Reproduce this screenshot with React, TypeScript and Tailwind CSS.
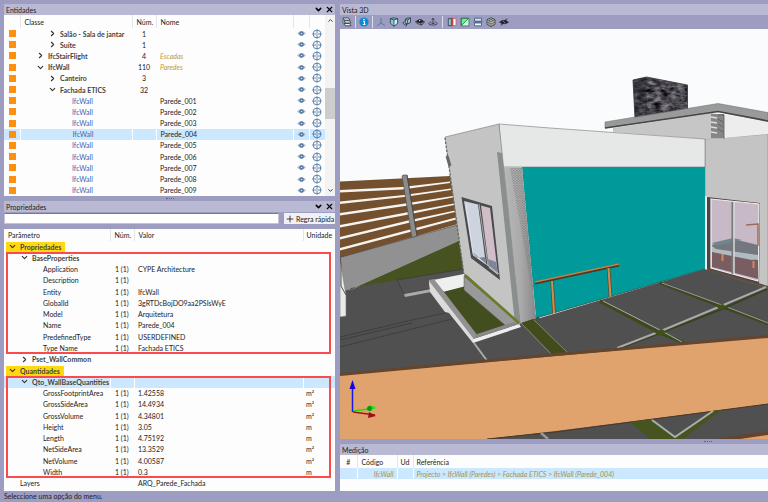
import React from "react";
import { ChevronDown, ChevronRight, ChevronUp, Plus, X } from "lucide-react";

type Entity = { name: string; level: number; state?: "open" | "closed"; count?: string; label?: string; selected?: boolean };

const entities: Entity[] = [
  { name: "Salão - Sala de jantar", level: 2, state: "closed", count: "1" },
  { name: "Suíte", level: 2, state: "closed", count: "1" },
  { name: "IfcStairFlight", level: 1, state: "closed", count: "4", label: "Escadas" },
  { name: "IfcWall", level: 1, state: "open", count: "110", label: "Paredes" },
  { name: "Canteiro", level: 2, state: "closed", count: "3" },
  { name: "Fachada ETICS", level: 2, state: "open", count: "32" },
  ...[1, 2, 3, 4, 5, 6, 7, 8, 9].map((n) => ({ name: "IfcWall", level: 3, label: `Parede_00${n}`, selected: n === 4 })),
];

const baseProperties = [
  ["Application", "CYPE Architecture"],
  ["Description", ""],
  ["Entity", "IfcWall"],
  ["GlobalId", "3gRTDcBojDO9aa2PSIsWyE"],
  ["Model", "Arquitetura"],
  ["Name", "Parede_004"],
  ["PredefinedType", "USERDEFINED"],
  ["Type Name", "Fachada ETICS"],
];

const quantities = [
  ["GrossFootprintArea", "1.42558", "m²"],
  ["GrossSideArea", "14.4934", "m²"],
  ["GrossVolume", "4.34801", "m²"],
  ["Height", "3.05", "m"],
  ["Length", "4.75192", "m"],
  ["NetSideArea", "13.3529", "m²"],
  ["NetVolume", "4.00587", "m²"],
  ["Width", "0.3", "m"],
];

function Toggle({ open, label }: { open: boolean; label: string }) {
  const Icon = open ? ChevronDown : ChevronRight;
  return (
    <button aria-label={label} aria-expanded={open} className="flex w-3 shrink-0 items-center">
      <Icon size={9} strokeWidth={3} color="#333" />
    </button>
  );
}

function PanelTitle({ title, controls }: { title: string; controls?: boolean }) {
  return (
    <div className="flex h-[11px] shrink-0 items-center bg-[#b9b9d3] pl-[2px] pr-px">
      <h2 className="flex-1">{title}</h2>
      {controls && (
        <div className="flex gap-[2px] text-black">
          <button aria-label="Recolher"><ChevronDown size={9} strokeWidth={4} /></button>
          <button aria-label="Fechar"><X size={9} strokeWidth={3} /></button>
        </div>
      )}
    </div>
  );
}

function EyeIcon() {
  return (
    <svg viewBox="0 0 8 8" className="mx-auto block size-[9px]">
      <path d="M0 4Q4 .2 8 4Q4 7.8 0 4Z" fill="#a9bdd6" />
      <circle cx="4" cy="4" r="2" fill="#54779f" />
      <circle cx="4" cy="4" r=".7" fill="#dbe6f2" />
    </svg>
  );
}

function TargetIcon() {
  return (
    <svg viewBox="0 0 10 10" className="mx-auto block size-[10px]" fill="none" stroke="#5078a4">
      <circle cx="5" cy="5" r="3.9" strokeWidth=".9" />
      <path d="M5 .4V4M5 6v3.6M.4 5H4M6 5h3.6" strokeWidth=".9" />
      <circle cx="5" cy="5" r=".7" fill="#5078a4" stroke="none" />
    </svg>
  );
}

const indent = ["", "pl-4", "pl-7", "pl-[52px]"];

function EntitiesPanel() {
  return (
    <section className="shrink-0">
      <PanelTitle title="Entidades" controls />
      <div className="flex bg-[#fdfdfe]">
        <table className="h-[181px] flex-1 table-fixed border-collapse">
          <colgroup>
            <col className="w-4" /><col className="w-[112px]" /><col className="w-6" /><col />
            <col className="w-4" /><col className="w-4" />
          </colgroup>
          <thead>
            <tr className="h-[13px] text-left">
              <th className="border-r border-[#e4e4ec] p-0" />
              <th className="border-r border-[#e4e4ec] p-0 pl-1 font-normal">Classe</th>
              <th className="border-r border-[#e4e4ec] p-0 pl-[4px] font-normal">Núm.</th>
              <th className="border-r border-[#e4e4ec] p-0 pl-[4px] font-normal">Nome</th>
              <th className="border-r border-[#e4e4ec] p-0" />
              <th className="p-0" />
            </tr>
          </thead>
          <tbody>
            {entities.map((e, i) => (
              <tr key={i} className={e.selected ? "bg-[#cce8ff]" : ""}>
                <td className={e.selected ? "border-r border-white p-0" : "p-0"}>
                  <div className="ml-[5px] size-[7px] bg-[#ff8f0f]" />
                </td>
                <td className={e.selected ? "border-r border-white p-0" : "p-0"}>
                  <div className={`flex items-center whitespace-nowrap ${indent[e.level]} ${e.state ? "font-bold text-[#444]" : "text-[#3564b4]"}`}>
                    {e.state && <Toggle open={e.state === "open"} label={e.name} />}
                    {e.name}
                  </div>
                </td>
                <td className={e.selected ? "border-r border-white p-0 text-center" : "p-0 text-center"}>{e.count}</td>
                <td className={e.state ? "p-0 pl-[4px] italic text-[#c19a35]" : "p-0 pl-[4px]"}>{e.label}</td>
                <td className={e.selected ? "border-x border-white p-0" : "p-0"}><EyeIcon /></td>
                <td className="p-0"><TargetIcon /></td>
              </tr>
            ))}
          </tbody>
        </table>
        <div className="flex w-[10px] flex-col items-center justify-between bg-[#f3f3f3] py-[2px]">
          <ChevronUp size={7} strokeWidth={3} />
          <div className="mt-16 h-[31px] w-full bg-[#cdcdcd]" />
          <div className="flex-1" />
          <ChevronDown size={7} strokeWidth={3} />
        </div>
      </div>
    </section>
  );
}

function PropertyRow({ name, value, unit }: { name: string; value: string; unit?: string }) {
  return (
    <tr>
      <td className="p-0 pl-[39px]">{name}</td>
      <td className="p-0 pl-[5px]">1 (1)</td>
      <td className="p-0 pl-[4px]">{value}</td>
      <td className="p-0 pl-[3px]">{unit}</td>
    </tr>
  );
}

function Category({ name }: { name: string }) {
  return (
    <tr>
      <td colSpan={4} className="p-0">
        <div className="ml-[2px] flex w-max items-center bg-[#ffd90f] pl-[2px] pr-1 font-bold text-[#444]">
          <Toggle open label={name} />{name}
        </div>
      </td>
    </tr>
  );
}

function GroupCell({ name, open }: { name: string; open: boolean }) {
  return (
    <div className="flex items-center whitespace-nowrap pl-4 font-bold text-[#444]">
      <Toggle open={open} label={name} />{name}
    </div>
  );
}

const redFrame = "relative after:pointer-events-none after:absolute after:inset-y-0 after:left-[2px] after:right-1 after:border-2 after:border-[#fc4a4c] after:content-['']";

function PropertiesPanel() {
  return (
    <section className="flex flex-1 flex-col">
      <div className="flex h-[5px] shrink-0 items-center justify-center">
        <span className="w-2 border-t border-dotted border-[#60608a]" />
      </div>
      <PanelTitle title="Propriedades" controls />
      <div className="mt-px flex h-[11px] shrink-0 gap-[5px]">
        <input aria-label="Procurar propriedade" className="min-w-0 flex-1 border border-[#c4c4d6] border-t-[#77778f] bg-white px-1 outline-none" />
        <button className="flex w-[51px] items-center gap-px whitespace-nowrap bg-[#f0f0f5] pl-px">
          <Plus size={10} strokeWidth={2} className="shrink-0" />
          Regra rápida
        </button>
      </div>
      <div className="mt-[5px] flex-1 bg-[#fdfdfe]">
        <table className="h-[260px] w-full table-fixed border-collapse">
          <colgroup>
            <col /><col className="w-6" /><col className="w-[169px]" /><col className="w-8" />
          </colgroup>
          <thead>
            <tr className="h-3 text-left">
              <th className="border-r border-[#e4e4ec] p-0 pl-[4px] font-normal">Parâmetro</th>
              <th className="border-r border-[#e4e4ec] p-0 pl-[4px] font-normal">Núm.</th>
              <th className="border-r border-[#e4e4ec] p-0 pl-[4px] font-normal">Valor</th>
              <th className="p-0 pl-[3px] font-normal">Unidade</th>
            </tr>
          </thead>
          <tbody><Category name="Propriedades" /></tbody>
          <tbody className={redFrame}>
            <tr><td colSpan={4} className="p-0"><GroupCell name="BaseProperties" open /></td></tr>
            {baseProperties.map(([n, v]) => <PropertyRow key={n} name={n} value={v} />)}
          </tbody>
          <tbody>
            <tr><td colSpan={4} className="p-0"><GroupCell name="Pset_WallCommon" open={false} /></td></tr>
            <Category name="Quantidades" />
          </tbody>
          <tbody className={redFrame}>
            <tr className="bg-[#cce8ff]">
              <td className="border-r border-white p-0"><GroupCell name="Qto_WallBaseQuantities" open /></td>
              <td className="border-r border-white p-0" />
              <td className="border-r border-white p-0" />
              <td className="p-0" />
            </tr>
            {quantities.map(([n, v, u]) => <PropertyRow key={n} name={n} value={v} unit={u} />)}
          </tbody>
          <tbody>
            <tr>
              <td className="p-0 pl-4">Layers</td>
              <td className="p-0" />
              <td className="p-0 pl-[4px]">ARQ_Parede_Fachada</td>
              <td className="p-0" />
            </tr>
          </tbody>
        </table>
      </div>
    </section>
  );
}

function Tool({ label, children }: { label: string; children: React.ReactNode }) {
  return (
    <button aria-label={label} className="flex size-[10px] items-center justify-center">
      <svg viewBox="0 0 10 10" className="size-[10px]" fill="none" stroke="#2c3440" strokeWidth=".8" strokeLinejoin="round">{children}</svg>
    </button>
  );
}

function Toolbar() {
  return (
    <div className="flex h-[14px] shrink-0 items-center bg-[#9d9dc1] pl-[2px]">
      <Tool label="Camadas">
        <path d="M1 1h5.500l1.500 2.200H2.500Z" fill="#f5f5ef" />
        <path d="M2 3.800h5.500L9 6H3.500Z" fill="#f5f5ef" />
        <path d="M2 6.500h5.500L9 8.800H3.500Z" fill="#f5f5ef" />
        <path d="M.7 1.500v4.500l2 2.500" stroke="#3b7f83" />
      </Tool>
      <span className="mx-[3px] h-3 w-px bg-[#dedeeb]" />
      <Tool label="Informação">
        <circle cx="5" cy="5" r="4.600" fill="#078bd3" stroke="none" />
        <path d="M4 4.300h1.500v3M3.800 7.400h2.700" stroke="#fff" strokeWidth="1" />
        <circle cx="5" cy="2.500" r=".8" fill="#fff" stroke="none" />
      </Tool>
      <span className="mx-[3px] h-3 w-px bg-[#dedeeb]" />
      <div className="flex gap-[3px]">
        <Tool label="Eixos"><path d="M5 1v5L1 9M5 6l4 2.500" stroke="#46718c" /></Tool>
        <Tool label="Vista frontal"><path d="M1.300 1.700 5 .8l3.700.9v4.500L5 9.400 1.300 6.200Z" fill="#8ccbd4" /><path d="M5 3v6M1.300 1.700 5 3l3.700-1.300" /><path d="m5.600 3.400 2.400-.9v3.400L5.600 8Z" fill="#c5f2f5" stroke="none" /></Tool>
        <Tool label="Rodar vista"><path d="m4 1.500 4.500-.7v4.700L5.500 7 3 5.500Z" fill="#9bd0d5" /><path d="m3 2.500 2.800.5 2.700-2M5.600 3v4M2.500 4C.4 5.500.5 7.500 4.500 8M3.600 6.500 5 8 3.600 9.500" /></Tool>
        <Tool label="Orbitar"><path d="M.8 3.800Q-.2 6 5 7.500M9.200 4q1 1.500-2 3" stroke="#333" /><path d="M1.200 4.500Q5 .5 8.800 4.500 5 7.500 1.200 4.500Z" fill="#222" /><circle cx="4.700" cy="3.600" r=".7" fill="#fff" stroke="none" /><path d="m5.500 6 2 1.400-2 1.400Z" fill="#222" stroke="none" /></Tool>
        <Tool label="Deslocar"><path d="M5 7V1.500M3.700 3 5 1.200 6.300 3M3.400 4.800C-.5 6-.2 8 5 8s5.600-2 1.600-3.200M3.500 6.500h3" /></Tool>
      </div>
      <span className="mx-1 h-3 w-px bg-[#dedeeb]" />
      <div className="flex gap-[3px]">
        <Tool label="Plano de corte"><path d="M1.300 1.600h3v7h-3Z" fill="#95c9d3" /><path d="M6 1.600h3v7H6Z" fill="#fff" stroke="#e25253" /><path d="M5.100.5v9" stroke="#c93336" strokeWidth="1.200" /></Tool>
        <Tool label="Secção"><path d="M1.200 1.200h7.600v7.600H1.200Z" fill="#65f18d" /><path d="M8.500 1.600 1.600 8.500h6.900Z" fill="#cafbd7" stroke="none" /><path d="M1 9 9 1" stroke="#128347" /></Tool>
        <Tool label="Dividir"><path d="M1.500 1.200h7v3h-7Z" fill="#c7e7f0" stroke="#3e527d" /><path d="M1.500 6h7v2.800h-7Z" fill="#f5f7ff" stroke="#3e527d" /><path d="M.5 5h9" stroke="#3e527d" /></Tool>
        <Tool label="Modelo"><path d="m5 .7 4 2v4.700L5 9.500 1 7.400V2.700Z" fill="#c5cdb5" /><path d="m1 2.700 4 2 4-2M5 4.700v4.800M1 5l4 2 4-2M3 1.700l4 2v4.700M7 1.700l-4 2v4.700" strokeWidth=".5" /><path d="M5.400 5 7 4.200v1.600l-1.600.8Z" fill="#e9a292" stroke="none" /></Tool>
        <Tool label="Ocultar"><path d="M.5 5.200Q5 1.400 9.500 5.200 5 8.400.5 5.200Z" fill="#222" /><circle cx="5" cy="5" r="1.100" fill="#9d9dc1" stroke="none" /><path d="m2 8.500 6-7" stroke="#111" strokeWidth=".9" /></Tool>
      </div>
    </div>
  );
}

const slats = [
  "M340 190 402 187 450 181.500V183L402 189.500 340 192.500Z",
  "M340 201.500 404 195 451 188.500V190L404 197 340 204Z",
  "M340 213 405 203.500 453 196V197.500L405 206 340 215.500Z",
  "M340 225 406 212.500 454 203.500V205L406 215 340 227.500Z",
  "M340 237 408 220.500 455 210.500V212L408 223 340 239.500Z",
  "M340 248 410 229.500 456 217.500V219.500L410 232 340 250.500Z",
];

function Scene() {
  return (
    <svg role="img" aria-label="Modelo 3D da moradia" viewBox="340 29 428 410" preserveAspectRatio="xMidYMid slice" className="block size-full">
      <defs>
        <linearGradient id="column"><stop stopColor="#b9b9b9" /><stop offset=".55" stopColor="#aaa" /><stop offset="1" stopColor="#888" /></linearGradient>
        <pattern id="hatch" width="3" height="2.500" patternUnits="userSpaceOnUse"><path d="M0 0 3 2" stroke="#666" strokeWidth=".6" /></pattern>
        <filter id="stone" x="0" y="0" width="100%" height="100%" colorInterpolationFilters="sRGB">
          <feTurbulence type="fractalNoise" baseFrequency=".13 .28" numOctaves="3" seed="4" />
          <feColorMatrix values=".8 0 0 0 -.11  .8 0 0 0 -.12  .8 0 0 0 -.09  0 0 0 0 1" />
          <feComposite in2="SourceGraphic" operator="in" />
        </filter>
      </defs>
      <rect x="340" y="29" width="428" height="410" fill="#fafbfc" />

      <path d="M340 290 462 266 540 318 705 269 768 287V439H340Z" fill="#505051" />
      <path d="M340 181.500 450 176 458 224 340 258Z" fill="#75502f" />
      {slats.map((d) => <path key={d} d={d} fill="#f5f4f1" />)}
      <path d="m402 176 1-1h4l10 61-5 2Z" fill="#8b8b8b" stroke="#4b4b4b" strokeWidth=".6" />
      <path d="m407 175 10 61" stroke="#444" strokeWidth=".8" />
      <path d="M340 257.500 457 225l4 16-109 49-12 1Z" fill="#919191" stroke="#4d4d4d" strokeWidth=".7" />
      <path d="m350 290 109-49 5 28-67 11-46 8Z" fill="#465220" />
      <path d="m340 259 6 36v21l-6 1Z" fill="#e9ebeb" stroke="#777" strokeWidth=".6" />
      <path d="m340 256 1 8v22l5 9" stroke="#555" fill="none" />
      <path d="m397 280 67-11 2 12-37 8-25 5Z" fill="#535354" stroke="#39393a" strokeWidth=".7" />
      <path d="m404 294 27-5v3l-26 5Z" fill="#aaa" />
      <path d="m340 337 72-17 38-8M340 340l72-17M340 347l112-28" stroke="#373737" strokeWidth=".7" fill="none" />

      <path d="m705 139 63-5v154l-63-19Z" fill="#c4c4c4" stroke="#777" strokeWidth=".5" />
      <path d="m613 128 98-15 13 2-4 23-15 1-92-7Z" fill="#c6c6c6" />
      <path d="m724 114 44 8v12l-44 4Z" fill="#ededed" />
      <path d="M711 114h13v24h-13Z" fill="#858787" />
      <path d="m711 117 6 1M711 122l6 1M711 127l6 1M711 132l6 1" stroke="#ddd" strokeWidth="1.500" />
      <path d="M718 115h6v24M718 119l5 3M718 124l5 3M718 129l5 3" stroke="#57595b" strokeWidth=".8" fill="none" />
      <path d="m633 80 13.500-3 41 8v24L647 116l-12 2Z" fill="#454449" filter="url(#stone)" />
      <path d="m646.500 77 .5 39-12 2-2-38Z" fill="#1d1c22" fillOpacity=".35" />
      <path d="m633 80 13.500-3 41 8v24L647 116l-12 2Z" fill="none" stroke="#333238" strokeWidth=".8" />
      <path d="m605 122 113-18.500 50 9v9l-50-10L605 128Z" fill="#999b9b" stroke="#666" strokeWidth=".5" />
      <path d="m605 128 113-16.500 50 9.500" fill="none" stroke="#464646" strokeWidth="1.700" />

      <path d="m499 124 51 4 155 11v28H502Z" fill="#e6e8e8" stroke="#888" strokeWidth=".7" />
      <path d="M522 167h183v102l-155 45-14 4Z" fill="#009a9b" />
      <path d="m705 269-155 45-14 4" stroke="#304f4a" strokeWidth=".8" fill="none" />
      <path d="m502 167 20 .5 14 151-16 5Z" fill="url(#column)" />
      <path d="m510 168 12-.5 12 115-2 8Z" fill="url(#hatch)" />
      <path d="m445 137 54-13 3 28 18 172-3 1-53-50Z" fill="#c4c4c4" stroke="#777" strokeWidth=".6" />
      <path d="m497 152 5 1 18 170-5 1Z" fill="#8b8e8e" />
      <path d="m445 138 19 137" stroke="#646464" strokeWidth="1.200" strokeDasharray="2 2" fill="none" />
      <path d="m447 156 3 10" stroke="#666" strokeWidth="3" />
      <path d="m461.500 197 30.500 9 8 74-29-22Z" fill="#4a4b4d" />
      <path d="m464 201 14 3.500 8 60-13-9Z" fill="#cdd4df" />
      <path d="m481 205.500 9 2.500 8 67-9-7Z" fill="#cfbdc8" />
      <path d="m472 252 4 3 10 9-1-7-9 1Zm16 7 8 3 2 12-9-7Z" fill="#7c8697" />
      <path d="m466 203 7 51 26 20M479 204l9 62" fill="none" stroke="#eee" strokeWidth=".6" />

      <path d="m705 196 3 1v73l-3-1Z" fill="#f1f1f1" />
      <path d="m707 197 53 6-1 82-52-16Z" fill="#4b4346" />
      <path d="m711 199 48 5-1 77-47-13Z" fill="#c7bac6" stroke="#eee" strokeWidth="1.200" />
      <path d="m712 251 22 4 24 5v19l-46-12Z" fill="#795d61" />
      <path d="m712 245 21-6 25 6v12l-5 1-41-9Z" fill="#74777d" />
      <path d="m712 246 4 3 42 6v4l-6 1-40-8Z" fill="#afbcc2" />
      <path d="m712 243 21-5 9 2-25 6Z" fill="#71858d" />
      <path d="M722.500 254v7M753.500 261v7" stroke="#d18a5e" strokeWidth="2" />
      <path d="m746 225 12-1v22" stroke="#a06a58" strokeWidth="1.500" fill="none" />
      <path d="M732.500 202v72" stroke="#777" strokeWidth="2" />
      <path d="M734 202v72" stroke="#d9d9dc" strokeWidth="1.500" />
      <path d="m707 269 51 15 10 3" stroke="#5e4b3a" strokeWidth="2" fill="none" />

      <path d="m660 283 62 24 46 17" stroke="#3c491c" strokeWidth="2.500" fill="none" />
      <path d="m662 283 60 22 46 18" stroke="#999" strokeWidth="1" fill="none" />
      <path d="m600 301 60 32 24 10" stroke="#3d4b1c" strokeWidth="3.500" fill="none" />
      <path d="m603 301 57 29 22 12" stroke="#aaa" strokeWidth="1" fill="none" />
      <path d="m767 289-45 20-62 24-40 15" stroke="#38441f" strokeWidth="2" fill="none" />
      <path d="m766 287-45 19-60 25-44 17" stroke="#a9a9a9" strokeWidth="2" fill="none" />
      <path d="m716 306 7-2 3 3-6 3ZM654 332l8-3 4 3-7 4Z" fill="#405018" />

      <path d="m433 280 31-6 2 13-22 5Z" fill="#eeefef" />
      <path d="m443 292 23-6 42 38-31 11Z" fill="#434e20" />
      <path d="m464 276 55 48-13 2-42-36Z" fill="#999" stroke="#555" strokeWidth=".5" />
      <path d="m465 275 54 48" stroke="#697c27" strokeWidth="2.500" />
      <path d="m429 280 5-1 44 57-5 7-23-32-21-25Z" fill="#929292" />
      <path d="m429 281 1 11 15 20 4 1 24 30v-5Z" fill="#dcdcdc" />
      <path d="m473 339 46-15 2 3-48 16Z" fill="#eee" />
      <path d="m477 334 37-12 5 2-46 15Z" fill="#888" />
      <path d="m474 343 14 19" stroke="#aaa" strokeWidth="2" />
      <path d="m521 323 12-4 36 35-16 1Z" fill="#404c1b" />
      <path d="m521 323 33 34M534 320l35 34" stroke="#91986f" strokeWidth=".8" />
      <path d="m535 283 84-18" stroke="#4b3924" strokeWidth="3" />
      <path d="m535 282 84-18" stroke="#bc874e" strokeWidth="1.500" />
      <path d="m552 281 2 32M608.500 268l2 29" stroke="#5e472e" strokeWidth="3.500" />
      <path d="m552 281 2 32M608.500 268l2 29" stroke="#c99255" strokeWidth="2" />

      <path d="m340 375 216-19 212-19v67l-212 27-69 8H340Z" fill="#e0a36d" />
      <path d="m340 374.500 216-20 212-18" stroke="#65452e" strokeWidth="3" fill="none" />
      <path d="m487 439 69-7 212-28v35Z" fill="#505051" />
      <path d="m487 439 69-7 212-28" stroke="#4b3a2b" fill="none" />
      <path d="m630 422 22-3 23 18 38-26 9-1-39 29h-33Z" fill="#465420" />
      <path d="m652 420 23 17 38-26" fill="none" stroke="#adadad" strokeWidth="2" />
      <path d="m541 433 7 6" stroke="#999" strokeWidth="2.500" />
      <path d="m715 439 53-8v5l-23 3Z" fill="#64442e" />
      <path d="m740 439 28-4v4Z" fill="#e0a36d" />

      <path d="M352.500 412v-27" stroke="#1818e8" strokeWidth="1.500" />
      <path d="m352.500 380 3 9h-6Z" fill="#0909e9" />
      <path d="m353 411 22-3" stroke="#16e314" strokeWidth="1.500" />
      <path d="m369 405 7 2-6 4Z" fill="#11ee11" />
      <circle cx="369.500" cy="408.500" r="2.500" fill="#0a9613" />
      <path d="m353 412 22 3" stroke="#a51515" strokeWidth="1.500" />
      <path d="m369 412 7 4-8 2Z" fill="#9b1010" />
    </svg>
  );
}

function MeasurementPanel() {
  return (
    <section className="shrink-0">
      <PanelTitle title="Medição" />
      <div className="h-9 bg-[#fdfdfe]">
        <table className="w-full table-fixed border-collapse">
          <colgroup>
            <col className="w-[17px]" /><col className="w-10" /><col className="w-4" /><col />
          </colgroup>
          <thead>
            <tr className="h-[13px] text-left">
              <th className="border-r border-[#e4e4ec] p-0 text-center font-normal">#</th>
              <th className="border-r border-[#e4e4ec] p-0 pl-[4px] font-normal">Código</th>
              <th className="border-r border-[#e4e4ec] p-0 text-center font-normal">Ud</th>
              <th className="p-0 pl-[3px] font-normal">Referência</th>
            </tr>
          </thead>
          <tbody>
            <tr className="h-[11px] bg-[#cce8ff] italic text-[#a3934f]">
              <td className="border-r border-white p-0" />
              <td className="border-r border-white p-0 pr-[3px] text-right">IfcWall</td>
              <td className="border-r border-white p-0" />
              <td className="p-0 pl-[3px]">Projecto &gt; IfcWall (Paredes) &gt; Fachada ETICS &gt; IfcWall (Parede_004)</td>
            </tr>
          </tbody>
        </table>
      </div>
    </section>
  );
}

export default function App() {
  return (
    <div className="flex h-screen flex-col bg-[#9d9dc1] pt-1 font-[Lato,'Open_Sans',sans-serif] text-[7px] leading-[10px] text-[#222]">
      <main className="grid min-h-0 flex-1 grid-cols-[331px_1fr] gap-x-[5px] pl-1">
        <div className="flex min-h-0 flex-col">
          <EntitiesPanel />
          <PropertiesPanel />
        </div>
        <div className="flex min-h-0 min-w-0 flex-col">
          <PanelTitle title="Vista 3D" />
          <Toolbar />
          <div className="min-h-0 flex-1"><Scene /></div>
          <div className="flex h-[5px] shrink-0 items-center justify-end pr-14">
            <span className="w-2 border-t border-dotted border-[#60608a]" />
          </div>
          <MeasurementPanel />
        </div>
      </main>
      <footer className="h-[11px] shrink-0 pl-1">Seleccione uma opção do menu.</footer>
    </div>
  );
}
